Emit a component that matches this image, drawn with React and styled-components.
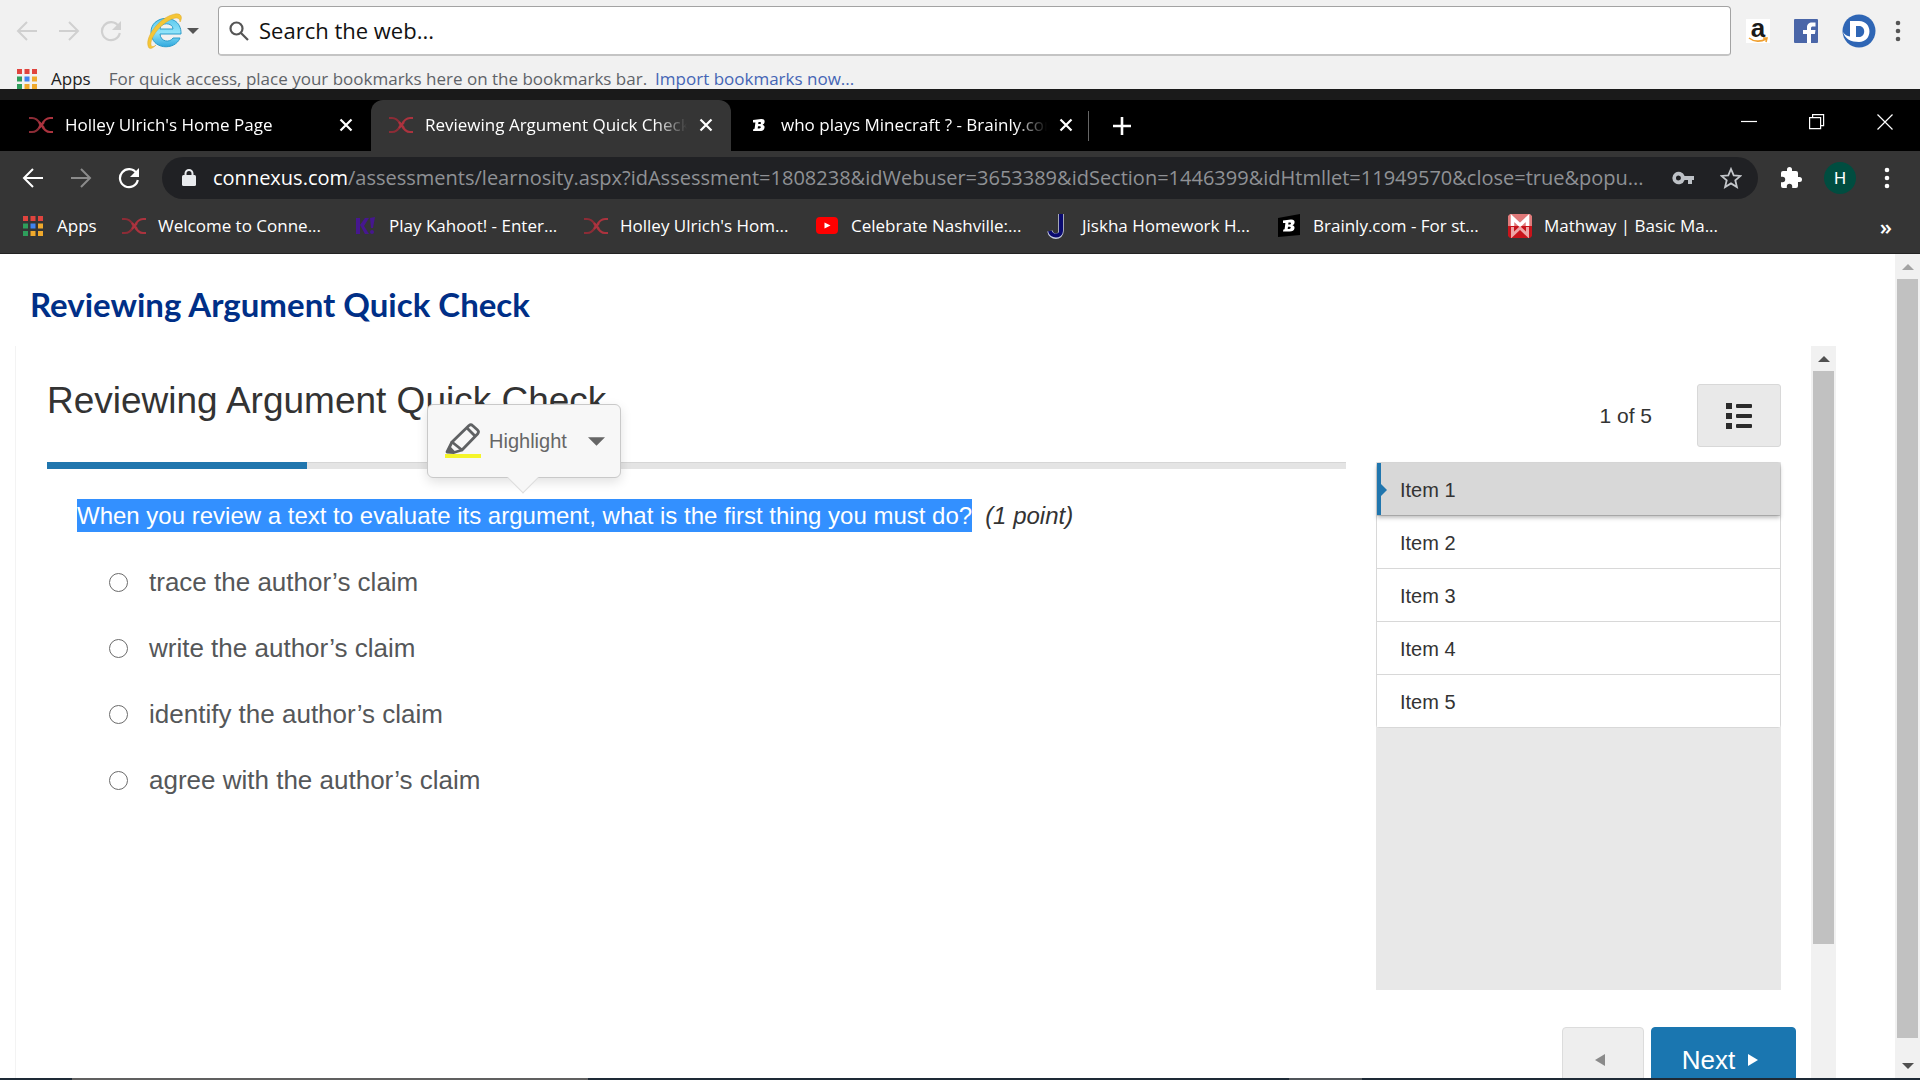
import React, { useState } from 'react';
import styled, { createGlobalStyle } from 'styled-components';

const GlobalStyle = createGlobalStyle`
  * { box-sizing: border-box; }
  body { margin: 0; background: #fff; overflow: hidden; }
  button { font: inherit; color: inherit; border: 0; background: none; padding: 0; margin: 0; }
  a { color: inherit; text-decoration: none; }
  svg { display: block; flex: none; }
`;

const UI_FONT = "'Open Sans', 'Noto Sans', sans-serif";
const TEXT_FONT = "'Liberation Sans', Arial, sans-serif";

/* ---------- data ---------- */
const tabs = [
  { icon: 'connexus', title: "Holley Ulrich's Home Page" },
  { icon: 'connexus', title: 'Reviewing Argument Quick Check', active: true },
  { icon: 'brainly', title: 'who plays Minecraft ? - Brainly.com' },
];

const bookmarks = [
  { icon: 'connexus', title: 'Welcome to Conne...' },
  { icon: 'kahoot', title: 'Play Kahoot! - Enter...' },
  { icon: 'connexus', title: "Holley Ulrich's Hom..." },
  { icon: 'youtube', title: 'Celebrate Nashville:...' },
  { icon: 'jiskha', title: 'Jiskha Homework H...' },
  { icon: 'brainlyBox', title: 'Brainly.com - For st...' },
  { icon: 'mathway', title: 'Mathway | Basic Ma...' },
];

const answers = [
  'trace the author’s claim',
  'write the author’s claim',
  'identify the author’s claim',
  'agree with the author’s claim',
];

const items = ['Item 1', 'Item 2', 'Item 3', 'Item 4', 'Item 5'];

/* ---------- icons ---------- */
const ArrowIcon = ({ flip }) => (
  <svg width="22" height="22" viewBox="0 0 22 22" fill="none" stroke="currentColor" strokeWidth="2">
    {flip ? <path d="M1 11h19M11 2l9 9-9 9" /> : <path d="M21 11H2M11 2l-9 9 9 9" />}
  </svg>
);

const ReloadIcon = () => (
  <svg width="22" height="22" viewBox="0 0 22 22">
    <path d="M18.5 6.2A9 9 0 1 0 19.8 13" fill="none" stroke="currentColor" strokeWidth="2.2" />
    <path d="M21 1v9h-9z" fill="currentColor" />
  </svg>
);

const CloseIcon = () => (
  <svg width="14" height="14" viewBox="0 0 14 14" stroke="#fff" strokeWidth="2.2">
    <path d="M1.5 1.5l11 11M12.5 1.5l-11 11" />
  </svg>
);

const DotsIcon = () => (
  <svg width="6" height="22" viewBox="0 0 6 22" fill="currentColor">
    <circle cx="3" cy="3" r="2.3" /><circle cx="3" cy="11" r="2.3" /><circle cx="3" cy="19" r="2.3" />
  </svg>
);

const appColors = ['#e0443e', '#e0443e', '#e0443e', '#2e9e5b', '#3f83f0', '#f0a92c', '#2e9e5b', '#f0a92c', '#f0a92c'];
const AppsIcon = () => (
  <svg width="20" height="20" viewBox="0 0 20 20">
    {appColors.map((c, i) => (
      <rect key={i} x={(i % 3) * 7.5} y={Math.floor(i / 3) * 7.5} width="5" height="5" fill={c} />
    ))}
  </svg>
);

const siteIcons = {
  connexus: (
    <svg width="24" height="18" viewBox="0 0 24 18" fill="none" strokeWidth="2.2">
      <path d="M0 2h3c4 0 6 2 8 5.500v3C9 14 7 16 3 16H0" stroke="#8c2c36" />
      <path d="M24 2h-3c-4 0-6 2-8.500 7 2.500 5 4.500 7 8.500 7h3" stroke="#ab333e" />
      <path d="M10 6l5 6M15 6l-5 6" stroke="#ab333e" />
    </svg>
  ),
  brainly: (
    <svg width="20" height="18" viewBox="0 0 20 18">
      <path fillRule="evenodd" fill="#fff" d="M4 4l8-1c3 0 4 1.500 3.500 3.500-.3 1.200-1 1.800-2 2.200 1.600.5 2.300 1.500 2 3-.4 2.300-2 3.300-5 3.300H4l.4-2 1.200-.2.8-6.400H4zM9.500 6l-.3 2h1.500c1.600 0 1.800-2 .3-2zM9 10.200l-.3 2.200h1.600c1.900 0 2-2.200.3-2.200z" />
    </svg>
  ),
  brainlyBox: (
    <svg width="24" height="24" viewBox="0 0 24 24">
      <path d="M1 4L23 0v21L1 23z" fill="#000" />
      <path fillRule="evenodd" fill="#fff" d="M6 6.500l8-1c3 0 4 1.500 3.500 3.500-.3 1.200-1 1.800-2 2.200 1.600.5 2.300 1.500 2 3-.4 2.300-2 3.300-5 3.300H6l.4-2 1.200-.2.8-6.400H6zM11.500 8.500l-.3 2h1.500c1.600 0 1.800-2 .3-2zM11 12.700l-.3 2.200h1.600c1.900 0 2-2.200.3-2.200z" />
    </svg>
  ),
  kahoot: (
    <svg width="24" height="22" viewBox="0 0 24 22" fill="#46178f">
      <path d="M3 3h4v16H3z M7 10l5-7h4l-5 8 5 8h-4z M17 3l5-1-2 11h-2z" />
      <circle cx="19" cy="17" r="2" />
    </svg>
  ),
  youtube: (
    <svg width="24" height="18" viewBox="0 0 24 18">
      <rect x="1" width="22" height="17" rx="4" fill="#f00" />
      <path d="M9.5 5.500l6 3-6 3z" fill="#fff" />
    </svg>
  ),
  jiskha: (
    <svg width="24" height="26" viewBox="0 0 24 26" fill="none">
      <path d="M15 1v17c0 7-10 7-11 0" stroke="#c7cde0" strokeWidth="5.500" />
      <path d="M15 1v17c0 6-10 6-11 0" stroke="#0a0a70" strokeWidth="4" />
    </svg>
  ),
  mathway: (
    <svg width="24" height="24" viewBox="0 0 24 24">
      <path d="M0 2l2-2h20l2 2v10H0z" fill="#e07a7a" />
      <path d="M0 12h24v10l-2 2H2l-2-2z" fill="#c8141b" />
      <path d="M4.500 12V4l7.500 7 7.500-7v8" fill="none" stroke="#fff" strokeWidth="3.500" />
      <path d="M4.500 13v8l7.500-7 7.500 7v-8" fill="none" stroke="#eda5a5" strokeWidth="3" />
    </svg>
  ),
};

const ExplorerIcon = () => (
  <svg width="38" height="38" viewBox="0 0 38 38">
    <defs>
      <linearGradient id="ie" x1="0" y1="0" x2="0" y2="1">
        <stop offset="0" stopColor="#5cc9ee" /><stop offset="0.5" stopColor="#8fe3fa" /><stop offset="1" stopColor="#2fa8de" />
      </linearGradient>
    </defs>
    <path
      d="M35 22H14c.5 8 10 9 13 4h7c-5 13-29 12-29-6C5 2 36 1 35 22zM14 17h13c0-7-13-7-13 0z"
      fill="url(#ie)" stroke="#2c9ccb" strokeWidth="1" fillRule="evenodd"
    />
    <path
      d="M3 36C-3 27 13 5 29 2c6-1 8 3 5 8 0-4-3-5-8-3C14 12 4 26 5 33c.5 2 3 2 5 0-3 3-5 4-7 3z"
      fill="#f5c637" stroke="#dca72a" strokeWidth="0.5"
    />
  </svg>
);

const AmazonIcon = () => (
  <IconTile>
    <AmazonLetter>a</AmazonLetter>
    <svg width="20" height="6" viewBox="0 0 20 6" fill="none" stroke="#f0a030" strokeWidth="1.6">
      <path d="M1 1c5 4 12 4 17 1M15 1h4l-1 4" />
    </svg>
  </IconTile>
);

const FacebookIcon = () => (
  <svg width="24" height="24" viewBox="0 0 24 24">
    <rect width="24" height="24" rx="1" fill="#4a66a8" />
    <path d="M13 24v-9h-4v-4h4V8.500C13 5 15 3.500 18 3.500h3.500v4H19c-1.500 0-2 .6-2 2V11h4.500l-.6 4H17v9z" fill="#fff" />
  </svg>
);

const DictionaryIcon = () => (
  <svg width="34" height="34" viewBox="0 0 34 34">
    <circle cx="17" cy="17" r="16.5" fill="#2f66b5" />
    <path fillRule="evenodd" d="M8 7h9c14 0 14 21 0 21C9 28 3 25 1 18c2 3 4 4 7 4.500zM14 12v11h3c7 0 7-11 0-11z" fill="#fff" />
  </svg>
);

const SearchIcon = () => (
  <svg width="20" height="20" viewBox="0 0 20 20" fill="none" stroke="#555" strokeWidth="2.2">
    <circle cx="7.5" cy="7.5" r="6" /><path d="M12 12l7 7" />
  </svg>
);

const LockIcon = () => (
  <svg width="14" height="18" viewBox="0 0 14 18">
    <rect x="0" y="6" width="14" height="11" rx="1.5" fill="#e8eaed" />
    <path d="M3.5 7V4.500a3.500 3.500 0 0 1 7 0V7" fill="none" stroke="#e8eaed" strokeWidth="2" />
  </svg>
);

const KeyIcon = () => (
  <svg width="22" height="14" viewBox="0 0 22 14" fill="#bdc1c6">
    <path fillRule="evenodd" d="M12.600 5H22v4h-2v4h-4V9h-3.400A6.300 6.300 0 1 1 12.600 5zM6.500 4.500a2.500 2.500 0 1 0 0 5 2.500 2.500 0 0 0 0-5z" />
  </svg>
);

const StarIcon = () => (
  <svg width="22" height="22" viewBox="0 0 22 22" fill="none" stroke="#c4c7cb" strokeWidth="1.8">
    <path d="M11 2l2.700 6.300 6.800.6-5.200 4.400 1.600 6.700L11 16.400 5.100 20l1.600-6.700L1.500 8.900l6.800-.6z" />
  </svg>
);

const PuzzleIcon = () => (
  <svg width="24" height="24" viewBox="0 0 24 24" fill="#fff">
    <path d="M20.500 11H19V7a2 2 0 0 0-2-2h-4V3.500a2.500 2.500 0 0 0-5 0V5H4a2 2 0 0 0-2 2v3.800h1.500a2.700 2.700 0 0 1 0 5.400H2V20a2 2 0 0 0 2 2h3.800v-1.500a2.700 2.700 0 0 1 5.400 0V22H17a2 2 0 0 0 2-2v-4h1.500a2.500 2.500 0 0 0 0-5z" />
  </svg>
);

const WindowIcon = ({ kind }) => (
  <svg width="16" height="16" viewBox="0 0 16 16" fill="none" stroke="#fff" strokeWidth="1.2">
    {kind === 'min' && <path d="M0 7.500h16" />}
    {kind === 'restore' && <path d="M.6 3.600h11v11H.6zM3.600 3.600v-3h11v11h-3" />}
    {kind === 'close' && <path d="M.5.5l15 15M15.500.5l-15 15" />}
  </svg>
);

const HighlighterIcon = () => (
  <svg width="36" height="36" viewBox="0 0 36 36">
    <g fill="none" stroke="#5f6163" strokeWidth="2.8" strokeLinejoin="round">
      <path d="M7 19L24 2.500c1.500-1.300 2.500-1 3.500 0l5 4.500c1.300 1.200 1.300 2.500 0 4L17 27z" />
      <path d="M22 5l8 8" />
      <path d="M7 19l-5 10 7 .5 8-2.500" />
    </g>
    <path d="M1 30l4-7 6 6.500z" fill="#5f6163" />
    <rect x="0" y="31" width="36" height="4" fill="#f5f52a" />
  </svg>
);

const ListIcon = () => (
  <svg width="26" height="26" viewBox="0 0 26 26" fill="#2b2b2b">
    {[0, 10, 20].map((y) => (
      <g key={y}>
        <rect x="0" y={y} width="6" height="6" />
        <rect x="10" y={y + 1} width="16" height="4" rx="1" />
      </g>
    ))}
  </svg>
);

const Triangle = ({ dir, size = 12, color = 'currentColor' }) => {
  const d = {
    up: 'M0 9L6 3l6 6z',
    down: 'M0 3h12L6 9z',
    left: 'M11 0v12L1 6z',
    right: 'M1 0v12l10-6z',
  }[dir];
  return <svg width={size} height={size} viewBox="0 0 12 12" fill={color}><path d={d} /></svg>;
};

/* ---------- layout ---------- */
const Screen = styled.div`
  display: flex;
  flex-direction: column;
  height: 100vh;
  overflow: hidden;
  font-family: ${UI_FONT};
`;

/* outer browser */
const OuterBar = styled.header`
  flex: none;
  height: 89px;
  overflow: hidden;
  background: #f1f1f1;
`;

const OuterTools = styled.div`
  display: flex;
  align-items: center;
  height: 62px;
  padding: 0 19px 0 16px;
`;

const NavButton = styled.button`
  display: flex;
  color: ${(p) => p.$color};
  margin-right: ${(p) => p.$gap}px;
`;

const MenuButton = styled.button`
  margin-left: ${(p) => p.$gap}px;
  color: ${(p) => p.$color};
`;

const ExplorerButton = styled.button`
  display: flex;
  align-items: center;
  gap: 3px;
  width: 72px;
  color: #555;
`;

const SearchBox = styled.label`
  flex: 1;
  display: flex;
  align-items: center;
  gap: 10px;
  height: 50px;
  padding: 0 10px;
  background: #fff;
  border: 1px solid #a3a3a3;
  border-bottom: 2px solid #c4c4c4;
  border-radius: 4px;
`;

const SearchInput = styled.input`
  flex: 1;
  border: 0;
  outline: 0;
  padding: 0 0 2px;
  font: 22px/30px ${UI_FONT};
  color: #111;
  &::placeholder { color: #111; opacity: 1; }
`;

const Shortcuts = styled.div`
  display: flex;
  align-items: center;
  gap: 24px;
  padding-left: 15px;
`;

const IconTile = styled.span`
  display: flex;
  flex-direction: column;
  align-items: center;
  width: 24px;
  height: 24px;
  background: #fff;
`;

const AmazonLetter = styled.b`
  font: bold 26px/18px ${TEXT_FONT};
  height: 19px;
  color: #1a1a1a;
`;

const OuterBookmarks = styled.div`
  display: flex;
  align-items: center;
  height: 34px;
  padding: 0 17px;
  font-size: 17px;
  line-height: 24px;
  white-space: nowrap;
  color: #5f6368;
`;

const OuterApps = styled.button`
  display: flex;
  align-items: center;
  gap: 14px;
  margin-right: 18px;
  color: #222;
`;

const ImportLink = styled.a`
  margin-left: 8px;
  color: #4565b5;
`;

const Gap = styled.div`
  flex: none;
  height: 11px;
  background: #1a1a1a;
`;

/* inner browser */
const TabStrip = styled.nav`
  flex: none;
  display: flex;
  align-items: center;
  height: 51px;
  padding-left: 11px;
  background: #000;
  color: #fff;
`;

const Tab = styled.div`
  display: flex;
  align-items: center;
  width: 360px;
  height: 51px;
  padding: 0 18px 2px;
  border-radius: 12px 12px 0 0;
  background: ${(p) => (p.$active ? '#353535' : 'transparent')};
`;

const TabTitle = styled.a`
  flex: 1;
  min-width: 0;
  margin: 0 12px;
  overflow: hidden;
  white-space: nowrap;
  font-size: 17px;
  line-height: 24px;
  mask-image: linear-gradient(to right, #000 calc(100% - 32px), transparent);
`;

const TabDivider = styled.span`
  width: 1px;
  height: 30px;
  margin: 0 24px 0 -3px;
  background: #666;
`;

const WindowButtons = styled.div`
  display: flex;
  gap: 52px;
  margin-left: auto;
  padding: 0 27px 8px 0;
`;

const Toolbar = styled.div`
  flex: none;
  display: flex;
  align-items: center;
  height: 54px;
  padding: 0 30px 0 22px;
  background: #353535;
  color: #fff;
`;

const AddressBar = styled.div`
  flex: 1;
  min-width: 0;
  display: flex;
  align-items: center;
  height: 42px;
  padding: 0 16px 0 20px;
  border-radius: 21px;
  background: #202124;
`;

const Address = styled.a`
  flex: 1;
  min-width: 0;
  margin: 0 16px 0 17px;
  overflow: hidden;
  white-space: nowrap;
  font-size: 20px;
  line-height: 28px;
  color: #8f9195;
  b { font-weight: 400; color: #fff; }
`;

const AddressActions = styled.div`
  display: flex;
  align-items: center;
  gap: 26px;
`;

const ToolbarActions = styled.div`
  display: flex;
  align-items: center;
  gap: 21px;
  padding-left: 21px;
`;

const Avatar = styled.button`
  width: 32px;
  height: 32px;
  border-radius: 50%;
  background: #004d40;
  font: 17px/32px Roboto, sans-serif;
  color: #fff;
`;

const Bookmarks = styled.nav`
  flex: none;
  display: flex;
  align-items: center;
  height: 49px;
  padding: 0 28px 6px 23px;
  border-bottom: 1px solid #232323;
  background: #353535;
  color: #fff;
  font-size: 17px;
  line-height: 24px;
  white-space: nowrap;
`;

const BookmarkApps = styled.button`
  display: flex;
  align-items: center;
  gap: 14px;
  width: 99px;
`;

const Bookmark = styled.a`
  display: flex;
  align-items: center;
  gap: 12px;
  width: 231px;
`;

const MoreButton = styled.button`
  margin-left: auto;
  font-size: 22px;
  font-weight: 600;
`;

/* page */
const Page = styled.div`
  flex: 1;
  min-height: 0;
  display: flex;
  background: #fff;
`;

const PageBody = styled.main`
  flex: 1;
  min-width: 0;
  display: flex;
  flex-direction: column;
`;

const PageTitle = styled.h1`
  flex: none;
  margin: 0;
  padding: 31px 30px 23px;
  font: bold 33px/38px Lato, sans-serif;
  color: #002f87;
`;

const Frame = styled.section`
  flex: 1;
  min-height: 0;
  display: flex;
  margin: 0 59px 0 15px;
  border-left: 1px solid #f3f3f3;
  font-family: ${TEXT_FONT};
  color: #333;
`;

const Assessment = styled.div`
  flex: 1;
  min-width: 0;
  display: grid;
  grid-template-columns: minmax(0, 1fr) 405px;
  grid-template-rows: 116px 528px auto;
  column-gap: 30px;
  padding: 0 30px 0 31px;
`;

const AssessmentTitle = styled.h2`
  margin: 0;
  padding-top: 34px;
  font-size: 37px;
  line-height: 42px;
  font-weight: 400;
`;

const Pager = styled.div`
  display: flex;
  align-items: center;
  justify-content: flex-end;
  gap: 45px;
  padding-top: 23px;
  font-size: 21px;
  line-height: 24px;
`;

const ListButton = styled.button`
  display: flex;
  align-items: center;
  justify-content: center;
  width: 84px;
  height: 63px;
  border: 1px solid #d8d8d8;
  border-radius: 3px;
  background: #e9e9e9;
`;

const Progress = styled.div`
  height: 7px;
  background: #e4e4e4;
  border-top: 1px solid #d6d6d6;
`;

const ProgressFill = styled.div`
  height: 7px;
  margin-top: -1px;
  background: #2076ae;
`;

const Question = styled.fieldset`
  margin: 0;
  padding: 30px 0 0 30px;
  border: 0;
`;

const Stem = styled.legend`
  float: left;
  width: 100%;
  padding: 0;
  margin-bottom: 33px;
  font-size: 24px;
  line-height: 33px;
  em { margin-left: 13px; }
`;

const Selected = styled.span`
  position: relative;
  display: inline-block;
  background: #3390ff;
  color: #fff;
`;

const Option = styled.label`
  clear: both;
  display: flex;
  align-items: center;
  gap: 21px;
  height: 34px;
  margin: 0 0 32px 32px;
  font-size: 26px;
  line-height: 34px;
  color: #555759;
`;

const Radio = styled.input`
  appearance: none;
  width: 19px;
  height: 19px;
  margin: 0;
  border: 1px solid #6b6b6b;
  border-radius: 50%;
  background: #fff;
  &:checked { border: 6px solid #2076ae; }
`;

/* sits above the selected text */
const Popup = styled.div`
  position: absolute;
  left: 350px;
  bottom: calc(100% + 21px);
  width: 194px;
  height: 74px;
  border: 1px solid #c9c9c9;
  border-radius: 6px;
  background: #f7f7f7;
  box-shadow: 0 4px 12px rgba(0, 0, 0, 0.12);
  &::after {
    content: '';
    position: absolute;
    left: 84px;
    bottom: -12px;
    width: 21px;
    height: 21px;
    background: #f7f7f7;
    border: solid #dcdcdc;
    border-width: 0 1px 1px 0;
    transform: rotate(45deg);
  }
`;

const PopupButton = styled.button`
  display: flex;
  align-items: center;
  width: 100%;
  height: 100%;
  padding: 0 15px 0 17px;
  font-size: 20px;
  line-height: 24px;
  color: #666;
  span { flex: 1; margin-left: 8px; text-align: left; }
`;

const Sidebar = styled.aside`
  background: #e8e8e8;
`;

const ItemList = styled.ol`
  margin: 0;
  padding: 0;
  list-style: none;
  border: 1px solid #d8d8d8;
  border-radius: 3px;
  background: #fff;
`;

const Item = styled.li`
  border-bottom: 1px solid #d8d8d8;
  &:last-child { border-bottom: 0; }
`;

const ItemButton = styled.button`
  position: relative;
  display: block;
  width: 100%;
  height: 52px;
  padding-left: ${(p) => (p.$active ? 19 : 23)}px;
  border-left: ${(p) => (p.$active ? '4px solid #2076ae' : '0')};
  background: ${(p) => (p.$active ? '#d8d8d8' : '#fff')};
  box-shadow: ${(p) => (p.$active ? '0 3px 4px rgba(0, 0, 0, 0.25)' : 'none')};
  z-index: ${(p) => (p.$active ? 1 : 0)};
  text-align: left;
  font-size: 20px;
  line-height: 54px;
  &::before {
    content: '';
    display: ${(p) => (p.$active ? 'block' : 'none')};
    position: absolute;
    left: 0;
    top: 21px;
    border: 6px solid transparent;
    border-left-color: #2076ae;
    border-right: 0;
  }
`;

const Footer = styled.div`
  grid-column: 1 / -1;
  display: flex;
  justify-content: flex-end;
  gap: 7px;
  margin-right: -15px;
  padding-top: 37px;
`;

const StepButton = styled.button`
  display: flex;
  align-items: center;
  justify-content: center;
  gap: 12px;
  width: ${(p) => (p.$primary ? 145 : 82)}px;
  height: 66px;
  padding-right: 6px;
  border: 1px solid ${(p) => (p.$primary ? '#1a76b0' : '#dcdcdc')};
  border-radius: 4px;
  background: ${(p) => (p.$primary ? '#1a76b0' : '#eee')};
  color: ${(p) => (p.$primary ? '#fff' : '#8a8a8a')};
  font-size: 26px;
  line-height: 30px;
`;

const Scrollbar = styled.div`
  flex: none;
  display: flex;
  flex-direction: column;
  align-items: center;
  width: 25px;
  background: #f1f1f1;
`;

const ScrollArrow = styled.button`
  flex: none;
  display: flex;
  align-items: center;
  justify-content: center;
  width: 25px;
  height: 25px;
`;

const ScrollTrack = styled.div`
  flex: 1;
  width: 21px;
`;

const ScrollThumb = styled.div`
  background: #c1c1c1;
`;

const Taskbar = styled.footer`
  flex: none;
  display: flex;
  height: 2px;
`;

const TaskbarPart = styled.span`
  flex: ${(p) => p.$grow};
  background: ${(p) => p.$color};
`;

function App() {
  const [current, setCurrent] = useState(0);

  return (
    <Screen>
      <GlobalStyle />

      <OuterBar>
        <OuterTools>
          <NavButton $color="#d0d0d0" $gap={20} aria-label="Back"><ArrowIcon /></NavButton>
          <NavButton $color="#d0d0d0" $gap={20} aria-label="Forward"><ArrowIcon flip /></NavButton>
          <NavButton $color="#d0d0d0" $gap={24} aria-label="Reload"><ReloadIcon /></NavButton>
          <ExplorerButton aria-label="Internet Explorer">
            <ExplorerIcon />
            <Triangle dir="down" />
          </ExplorerButton>
          <SearchBox>
            <SearchIcon />
            <SearchInput aria-label="Search the web" placeholder="Search the web..." />
          </SearchBox>
          <Shortcuts>
            <AmazonIcon />
            <FacebookIcon />
            <DictionaryIcon />
          </Shortcuts>
          <MenuButton $color="#555" $gap={19} aria-label="Menu"><DotsIcon /></MenuButton>
        </OuterTools>
        <OuterBookmarks>
          <OuterApps><AppsIcon />Apps</OuterApps>
          <span>For quick access, place your bookmarks here on the bookmarks bar.</span>
          <ImportLink href="#import">Import bookmarks now...</ImportLink>
        </OuterBookmarks>
      </OuterBar>
      <Gap />

      <TabStrip>
        {tabs.map((tab) => (
          <Tab key={tab.title} $active={tab.active}>
            {siteIcons[tab.icon]}
            <TabTitle href="#tab">{tab.title}</TabTitle>
            <button aria-label="Close tab"><CloseIcon /></button>
          </Tab>
        ))}
        <TabDivider />
        <button aria-label="New tab">
          <svg width="18" height="18" viewBox="0 0 18 18" stroke="#fff" strokeWidth="2.6"><path d="M9 0v18M0 9h18" /></svg>
        </button>
        <WindowButtons>
          <button aria-label="Minimize"><WindowIcon kind="min" /></button>
          <button aria-label="Restore"><WindowIcon kind="restore" /></button>
          <button aria-label="Close"><WindowIcon kind="close" /></button>
        </WindowButtons>
      </TabStrip>

      <Toolbar>
        <NavButton $color="#fff" $gap={26} aria-label="Back"><ArrowIcon /></NavButton>
        <NavButton $color="#8b8b8b" $gap={26} aria-label="Forward"><ArrowIcon flip /></NavButton>
        <NavButton $color="#fff" $gap={22} aria-label="Reload"><ReloadIcon /></NavButton>
        <AddressBar>
          <LockIcon />
          <Address href="#address">
            <b>connexus.com</b>/assessments/learnosity.aspx?idAssessment=1808238&amp;idWebuser=3653389&amp;idSection=1446399&amp;idHtmllet=11949570&amp;close=true&amp;popu...
          </Address>
          <AddressActions>
            <KeyIcon />
            <StarIcon />
          </AddressActions>
        </AddressBar>
        <ToolbarActions>
          <PuzzleIcon />
          <Avatar>H</Avatar>
        </ToolbarActions>
        <MenuButton $color="#fff" $gap={28} aria-label="Menu"><DotsIcon /></MenuButton>
      </Toolbar>

      <Bookmarks>
        <BookmarkApps><AppsIcon />Apps</BookmarkApps>
        {bookmarks.map((b) => (
          <Bookmark key={b.title} href="#bookmark">{siteIcons[b.icon]}{b.title}</Bookmark>
        ))}
        <MoreButton>»</MoreButton>
      </Bookmarks>

      <Page>
        <PageBody>
          <PageTitle>Reviewing Argument Quick Check</PageTitle>
          <Frame>
            <Assessment>
              <AssessmentTitle>Reviewing Argument Quick Check</AssessmentTitle>
              <Pager>
                <span>{current + 1} of 5</span>
                <ListButton aria-label="Item list"><ListIcon /></ListButton>
              </Pager>

              <div>
                <Progress>
                  <ProgressFill style={{ width: `${(current + 1) * 20}%` }} />
                </Progress>
                <Question>
                  <Stem>
                    <Selected>
                      When you review a text to evaluate its argument, what is the first thing you must do?
                      <Popup>
                        <PopupButton>
                          <HighlighterIcon />
                          <span>Highlight</span>
                          <Triangle dir="down" size={17} />
                        </PopupButton>
                      </Popup>
                    </Selected>
                    <em>(1 point)</em>
                  </Stem>
                  {answers.map((answer) => (
                    <Option key={answer}>
                      <Radio type="radio" name="answer" />
                      {answer}
                    </Option>
                  ))}
                </Question>
              </div>

              <Sidebar>
                <ItemList>
                  {items.map((item, i) => (
                    <Item key={item}>
                      <ItemButton $active={i === current} onClick={() => setCurrent(i)}>{item}</ItemButton>
                    </Item>
                  ))}
                </ItemList>
              </Sidebar>

              <Footer>
                <StepButton aria-label="Previous"><Triangle dir="left" /></StepButton>
                <StepButton $primary>Next<Triangle dir="right" /></StepButton>
              </Footer>
            </Assessment>

            <Scrollbar>
              <ScrollArrow aria-label="Scroll up"><Triangle dir="up" color="#505050" /></ScrollArrow>
              <ScrollTrack><ScrollThumb style={{ height: '81%' }} /></ScrollTrack>
            </Scrollbar>
          </Frame>
        </PageBody>

        <Scrollbar>
          <ScrollArrow aria-label="Scroll up"><Triangle dir="up" color="#a3a3a3" /></ScrollArrow>
          <ScrollTrack><ScrollThumb style={{ height: '98%' }} /></ScrollTrack>
          <ScrollArrow aria-label="Scroll down"><Triangle dir="down" color="#505050" /></ScrollArrow>
        </Scrollbar>
      </Page>

      <Taskbar>
        <TaskbarPart $grow={72} $color="#1e2a36" />
        <TaskbarPart $grow={516} $color="#606060" />
        <TaskbarPart $grow={701} $color="#1e2a36" />
        <TaskbarPart $grow={73} $color="#50555a" />
        <TaskbarPart $grow={558} $color="#1e2a36" />
      </Taskbar>
    </Screen>
  );
}

export default App;
